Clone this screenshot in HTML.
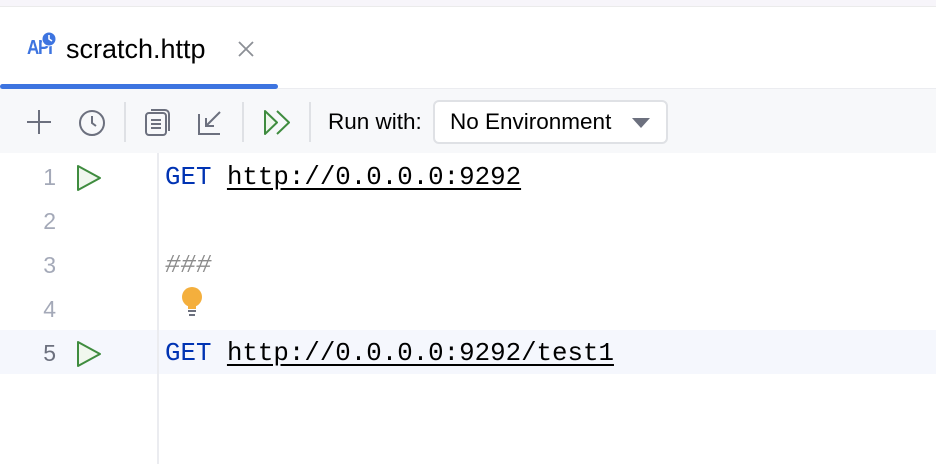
<!DOCTYPE html>
<html><head><meta charset="utf-8"><style>
*{margin:0;padding:0;box-sizing:border-box}
body{width:936px;height:464px;overflow:hidden;background:#fff;font-family:"Liberation Sans",sans-serif;position:relative}
.top{position:absolute;left:0;top:0;width:936px;height:7px;background:#f7f5fa;border-bottom:1px solid #ebebeb}
.tab{position:absolute;left:0;top:8px;width:936px;height:81px;background:#fff;border-bottom:1px solid #ebecf0}
.ul{position:absolute;left:0;top:84px;width:278px;height:5px;background:#3d74e0;border-radius:3px}
.tb{position:absolute;left:0;top:89px;width:936px;height:64px;background:#f7f8fa}
.sep{position:absolute;top:102px;width:2px;height:40px;background:#dfe1e5}
.txt{position:absolute;white-space:pre}
.code{position:absolute;font-family:"Liberation Mono",monospace;font-size:25.8px;white-space:pre;line-height:44px}
.ln{position:absolute;left:28px;width:28px;text-align:right;font-family:"Liberation Sans",sans-serif;font-size:23px;color:#a4a9b8;line-height:44px}
a{color:#000;text-decoration:underline;text-underline-offset:4px}
</style></head><body>
<div class="top"></div>
<div class="tab"></div>
<div class="txt" style="left:27px;top:37px;font-size:20px;font-weight:bold;color:#3d74e0;letter-spacing:-1.5px;transform:scaleX(0.85);transform-origin:left">API</div>
<svg style="position:absolute;left:41px;top:31px" width="16" height="16"><circle cx="8" cy="8" r="7.5" fill="#fff"/><circle cx="8" cy="8" r="6.5" fill="#3d74e0"/><path d="M8 4v4l3 2" stroke="#fff" stroke-width="1.6" fill="none"/></svg>
<div class="txt" style="left:66px;top:34px;font-size:27px;color:#000">scratch.http</div>
<svg style="position:absolute;left:237px;top:40px" width="18" height="18"><path d="M2 2L16 16M16 2L2 16" stroke="#8c8f96" stroke-width="1.8"/></svg>
<div class="ul"></div>
<div class="tb"></div>
<svg style="position:absolute;left:25px;top:108px" width="28" height="28"><path d="M14 2v24M2 14h24" stroke="#6c707e" stroke-width="2"/></svg>
<svg style="position:absolute;left:77px;top:108px" width="30" height="30"><circle cx="15" cy="15" r="12" stroke="#6c707e" stroke-width="2" fill="none"/><path d="M15 8v7l4 3" stroke="#6c707e" stroke-width="2" fill="none"/></svg>
<div class="sep" style="left:124px"></div>
<svg style="position:absolute;left:144px;top:108px" width="30" height="30"><rect x="2" y="5" width="20" height="22" rx="3" stroke="#6c707e" stroke-width="2" fill="none"/><path d="M7 2h14a4 4 0 0 1 4 4v17" stroke="#6c707e" stroke-width="2" fill="none"/><path d="M7 12h10M7 16h10M7 20h10" stroke="#6c707e" stroke-width="2"/></svg>
<svg style="position:absolute;left:196px;top:108px" width="30" height="30"><path d="M3 6v20h21" stroke="#6c707e" stroke-width="2" fill="none"/><path d="M24 4L10 18M10 10v8h8" stroke="#6c707e" stroke-width="2" fill="none"/></svg>
<div class="sep" style="left:242px"></div>
<svg style="position:absolute;left:262px;top:108px" width="30" height="30"><path d="M3 3v23l12-11.5z" stroke="#3f8c3f" stroke-width="2" fill="#f0f7ee" stroke-linejoin="round"/><path d="M15 3l12 11.5L15 26" stroke="#3f8c3f" stroke-width="2" fill="none" stroke-linejoin="round"/></svg>
<div class="sep" style="left:309px"></div>
<div class="txt" style="left:328px;top:109px;font-size:22.5px;color:#000">Run with:</div>
<div style="position:absolute;left:433px;top:100px;width:235px;height:44px;border:2px solid #dfe1e5;border-radius:6px;background:#fff"></div>
<div class="txt" style="left:450px;top:109px;font-size:22.5px;color:#000">No Environment</div>
<svg style="position:absolute;left:631px;top:117px" width="20" height="12"><path d="M1 1h18L10 11z" fill="#6c707e"/></svg>
<div style="position:absolute;left:0;top:330px;width:936px;height:44px;background:#f5f7fd"></div>
<div style="position:absolute;left:157px;top:153px;width:2px;height:311px;background:#ebecf0"></div>
<div class="ln" style="top:155px">1</div>
<div class="ln" style="top:199px">2</div>
<div class="ln" style="top:243px">3</div>
<div class="ln" style="top:287px">4</div>
<div class="ln" style="top:331px;color:#6c707e">5</div>
<svg style="position:absolute;left:76px;top:164px" width="28" height="28"><path d="M2 2v24l22-12z" stroke="#3f8c3f" stroke-width="2" fill="#f0f7ee" stroke-linejoin="round"/></svg>
<svg style="position:absolute;left:76px;top:340px" width="28" height="28"><path d="M2 2v24l22-12z" stroke="#3f8c3f" stroke-width="2" fill="#f0f7ee" stroke-linejoin="round"/></svg>
<div class="code" style="left:165px;top:156px"><span style="color:#0033b3">GET</span> <a>http://0.0.0.0:9292</a></div>
<div class="code" style="left:165px;top:244px;color:#8c8c8c;font-style:italic">###</div>
<svg style="position:absolute;left:180px;top:286px" width="24" height="32"><circle cx="12" cy="11" r="10" fill="#f4af3d"/><rect x="8" y="17" width="8" height="6" fill="#f4af3d"/><path d="M8 25h8M9 29h6" stroke="#6c707e" stroke-width="2"/></svg>
<div class="code" style="left:165px;top:332px"><span style="color:#0033b3">GET</span> <a>http://0.0.0.0:9292/test1</a></div>
</body></html>
